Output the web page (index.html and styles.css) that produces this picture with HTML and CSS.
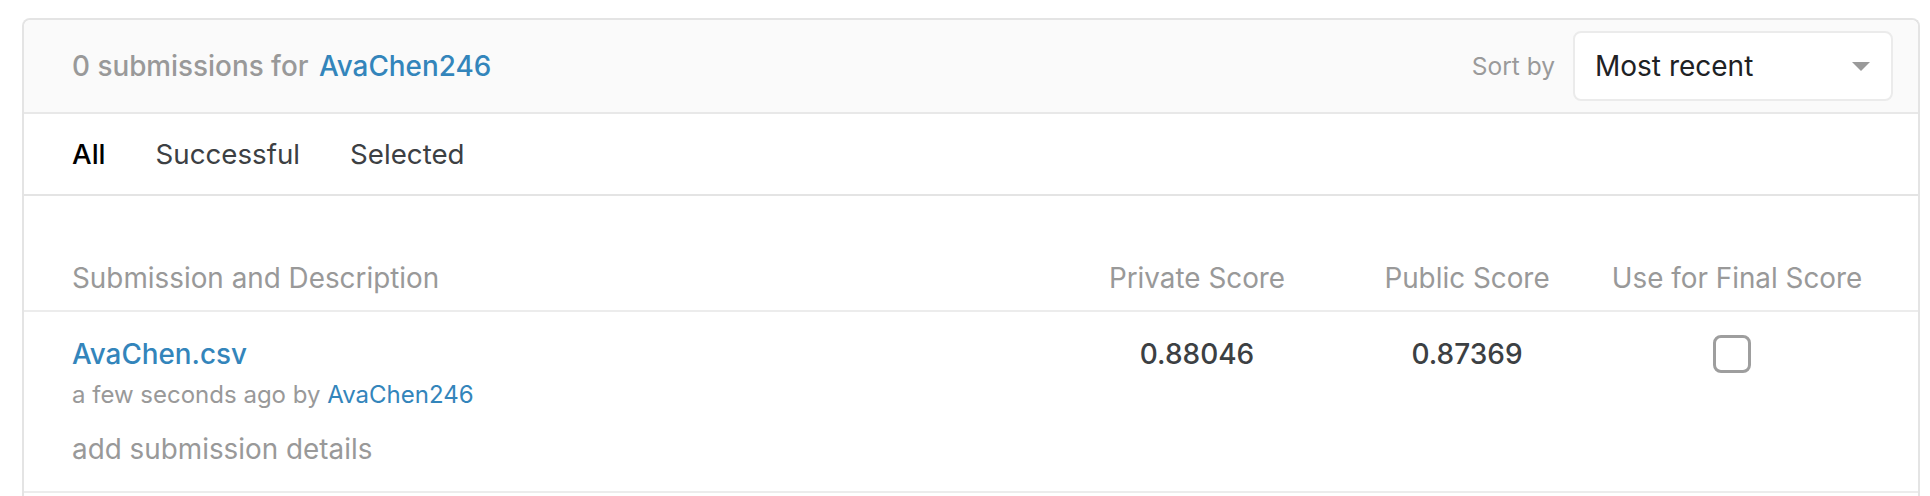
FILE: index.html
```html
<!DOCTYPE html>
<html lang="en">
<head>
<meta charset="utf-8">
<title>Submissions</title>
<link rel="stylesheet" href="styles.css">
</head>
<body>
<div class="card">
  <div class="card-header">
    <div class="count">0 submissions for <a class="link user" href="#">AvaChen246</a></div>
    <div class="sort">
      <span class="sort-label">Sort by</span>
      <div class="select">
        <span class="select-value">Most recent</span>
        <span class="caret"></span>
      </div>
    </div>
  </div>
  <div class="tabs">
    <span class="tab active">All</span>
    <span class="tab">Successful</span>
    <span class="tab">Selected</span>
  </div>
  <div class="grid col-heads">
    <div class="head">Submission and Description</div>
    <div class="head center">Private Score</div>
    <div class="head center">Public Score</div>
    <div class="head center">Use for Final Score</div>
  </div>
  <div class="grid row">
    <div class="desc">
      <a class="link title" href="#">AvaChen.csv</a>
      <div class="meta">a few seconds ago by <a class="link" href="#">AvaChen246</a></div>
      <div class="details">add submission details</div>
    </div>
    <div class="score">0.88046</div>
    <div class="score">0.87369</div>
    <div class="check-cell"><span class="checkbox"></span></div>
  </div>
  <div class="row-next"></div>
</div>
</body>
</html>
```
FILE: styles.css
```css
* { box-sizing: border-box; }
html, body { background: #ffffff; }
body {
  margin: 0;
  padding: 18px 10px 0 22px;
  font-family: Inter, "Noto Sans", "Liberation Sans", sans-serif;
  color: #3c4043;
  overflow: hidden;
}
a { text-decoration: none; }
.link { color: #3385bb; }

.card {
  border: 2px solid #e4e4e4;
  border-radius: 8px 8px 0 0;
  border-bottom: none;
  background: #fff;
}
.card-header {
  height: 94px;
  background: #fafafa;
  border-bottom: 2px solid #e8e8e8;
  border-radius: 7px 7px 0 0;
  display: flex;
  align-items: center;
  justify-content: space-between;
  padding: 0 25px 0 48px;
}
.count {
  font-size: 27.85px;
  color: #999999;
  font-weight: 500;
}
.count .user { margin-left: 3px; }
.sort { display: flex; align-items: center; gap: 18px; }
.sort-label { font-size: 24.5px; color: #9a9a9a; }
.select {
  width: 320px;
  height: 70px;
  background: #fff;
  border: 2px solid #ebebeb;
  border-radius: 8px;
  display: flex;
  align-items: center;
  justify-content: space-between;
  padding: 0 21px 0 20px;
}
.select-value { font-size: 28px; color: #202124; }
.caret {
  width: 0; height: 0;
  border-left: 9px solid transparent;
  border-right: 9px solid transparent;
  border-top: 9px solid #9a9a9a;
}

.tabs {
  height: 82px;
  display: flex;
  align-items: center;
  gap: 50px;
  padding: 0 0 0 48px;
  border-bottom: 2px solid #e4e4e4;
}
.tab { font-size: 27.7px; color: #3c4043; }
.tab.active { color: #000; font-weight: 500; }

.grid {
  display: grid;
  grid-template-columns: 1fr 270px 270px 270px;
  padding: 0 46px 0 48px;
}
.col-heads {
  padding-top: 62px;
  padding-bottom: 12px;
  border-bottom: 2px solid #ececec;
}
.head { font-size: 27.85px; line-height: 40px; color: #999999; }
.center { text-align: center; }

.row {
  padding-top: 22px;
  padding-bottom: 22px;
  border-bottom: 2px solid #ececec;
}
.desc { display: flex; flex-direction: column; }
.title { font-size: 27.8px; line-height: 40px; font-weight: 500; }
.meta { font-size: 24px; line-height: 34px; margin-top: 4px; color: #999999; }
.details { font-size: 27.85px; line-height: 40px; margin-top: 17px; color: #999999; }
.score {
  font-size: 28px;
  line-height: 40px;
  font-weight: 500;
  text-align: center;
  color: #3c4043;
}
.check-cell { display: flex; justify-content: center; padding-top: 1px; }
.checkbox {
  display: block;
  width: 38px;
  height: 38px;
  border: 3.5px solid #9e9e9e;
  border-radius: 8px;
  margin-left: -10px;
}
.row-next { height: 80px; }
```
